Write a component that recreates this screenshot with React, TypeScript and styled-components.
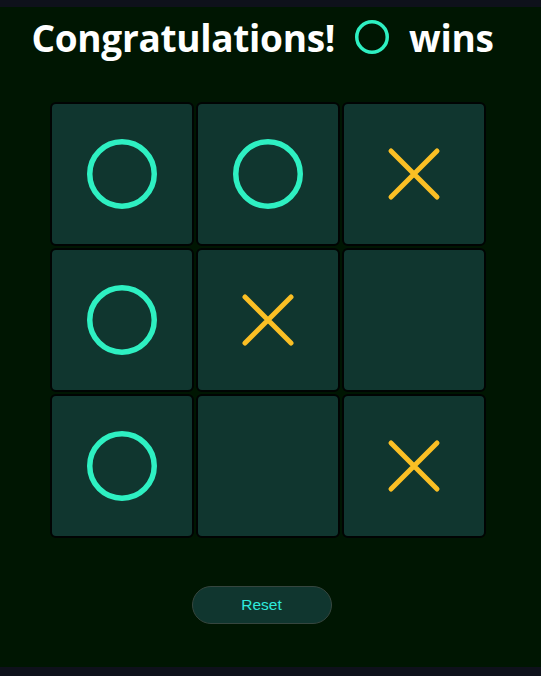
import React from "react";
import styled, { createGlobalStyle } from "styled-components";

const Global = createGlobalStyle`
  html, body { margin: 0; padding: 0; background: #0e111b; }
  body { padding: 7px 0 9px; }
`;

const Page = styled.main`
  height: 660px;
  background: #001602;
  display: flex;
  flex-direction: column;
  align-items: center;
  font-family: "Open Sans", "Liberation Sans", sans-serif;
`;

const Heading = styled.h1`
  margin: 5px 0 0 -16px;
  height: 50px;
  display: flex;
  align-items: center;
  gap: 20px;
  color: #ffffff;
  font-family: "Open Sans", sans-serif;
  font-weight: 700;
  font-size: 37px;
  letter-spacing: -0.3px;
`;

const Board = styled.div`
  margin: 40px 0 0 -5px;
  display: grid;
  grid-template-columns: repeat(3, 144px);
  grid-template-rows: repeat(3, 144px);
  gap: 2px;
`;

const Cell = styled.div`
  box-sizing: border-box;
  border: 2px solid #010403;
  border-radius: 6px;
  background: #10362f;
  display: flex;
  align-items: center;
  justify-content: center;
`;

const ResetButton = styled.button`
  margin: 48px 0 0 -18px;
  width: 140px;
  height: 38px;
  border-radius: 19px;
  border: 1px solid #36463f;
  background: #10362f;
  color: #2eeadc;
  font-family: "Liberation Sans", Arial, sans-serif;
  font-size: 15.5px;
  cursor: pointer;
`;

const O = ({ size, stroke }: { size: number; stroke: number }) => (
  <svg width={size} height={size} viewBox={`0 0 ${size} ${size}`}>
    <circle cx={size / 2} cy={size / 2} r={size / 2 - stroke / 2} fill="none" stroke="#2ef0c2" strokeWidth={stroke} />
  </svg>
);

const X = () => (
  <svg width="56" height="56" viewBox="0 0 56 56">
    <path d="M5 5 L51 51 M51 5 L5 51" stroke="#fbbf24" strokeWidth="5" strokeLinecap="round" fill="none" />
  </svg>
);

const board = ["O", "O", "X", "O", "X", "", "O", "", "X"];

export default function App() {
  return (
    <>
      <Global />
      <Page>
        <Heading>
          <span>Congratulations!</span>
          <O size={34} stroke={3.5} />
          <span>wins</span>
        </Heading>
        <Board>
          {board.map((v, i) => (
            <Cell key={i}>{v === "O" ? <O size={70} stroke={5.5} /> : v === "X" ? <X /> : null}</Cell>
          ))}
        </Board>
        <ResetButton>Reset</ResetButton>
      </Page>
    </>
  );
}
